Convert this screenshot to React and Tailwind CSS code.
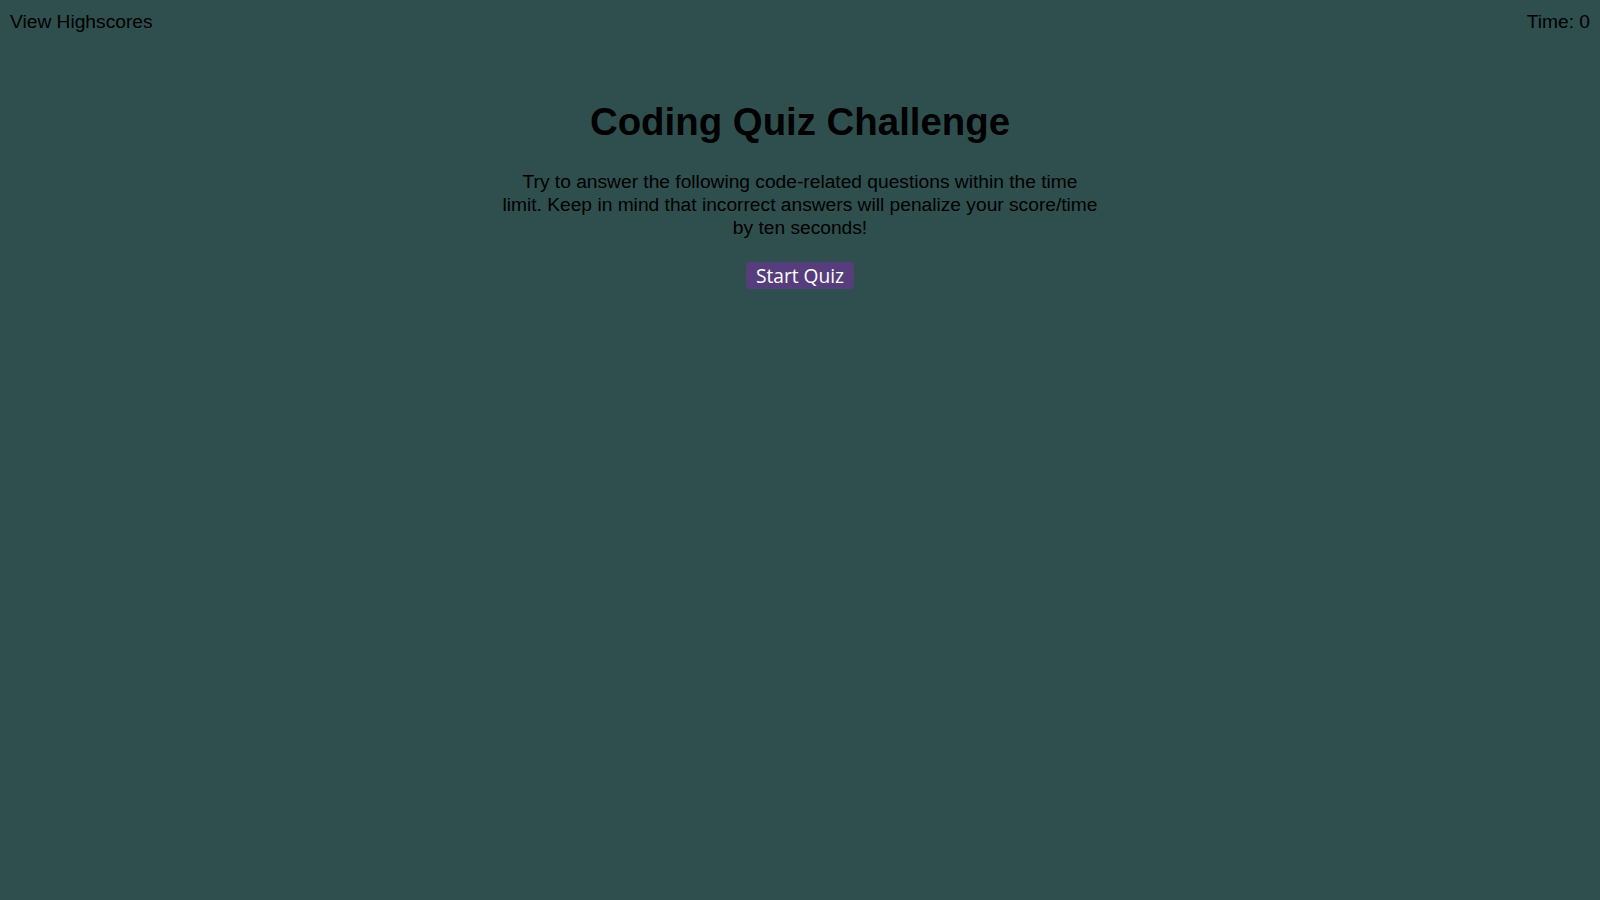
export default function App() {
  return (
    <div className="min-h-screen bg-[#2f4f4f] text-black font-['Liberation_Sans',Arial,sans-serif]">

      {/* HEADER */}
      <header className="flex justify-between px-[10px] pt-[11px] text-[19.2px] leading-[22px]">
        <a href="#" className="text-black">View Highscores</a>
        <span>Time: 0</span>
      </header>

      {/* INTRO */}
      <main className="flex flex-col items-center pt-[67px] text-center">
        <h1 className="text-[38.4px] leading-[44px] font-bold">
          Coding Quiz Challenge
        </h1>

        <p className="w-[598px] mt-[27px] text-[19.2px] leading-[22.8px]">
          Try to answer the following code-related questions within the time limit. Keep in mind that incorrect answers will penalize your score/time by ten seconds!
        </p>

        <button className="mt-[23px] px-[10px] py-px rounded bg-[#563d7c] text-white text-[19.2px] leading-[25px] font-['Open_Sans',sans-serif]">
          Start Quiz
        </button>
      </main>

    </div>
  );
}
